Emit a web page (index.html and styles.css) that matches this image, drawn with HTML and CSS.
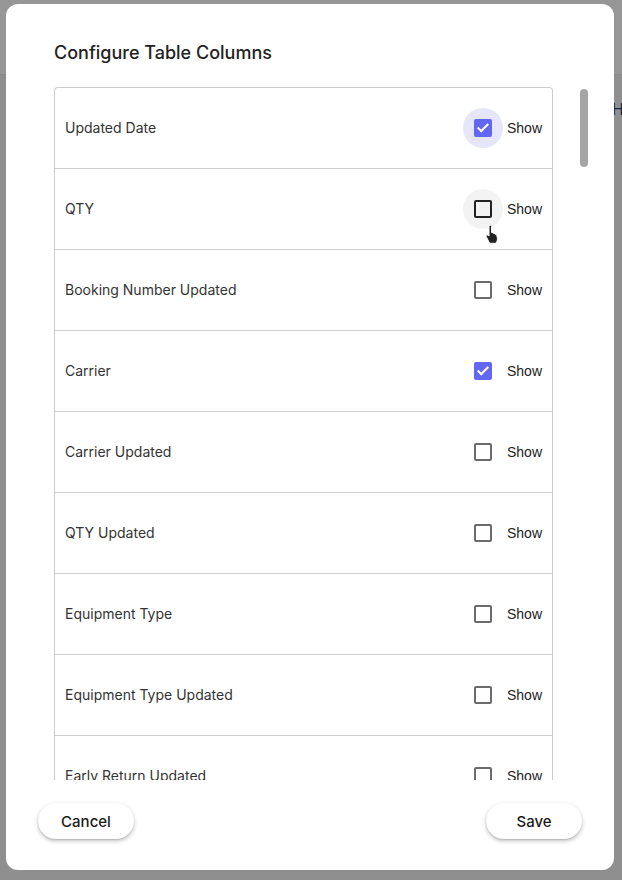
FILE: index.html
```html
<!DOCTYPE html>
<html lang="en">
<head>
    <meta charset="UTF-8">
    <meta name="viewport" content="width=device-width, initial-scale=1.0">
    <title>Configure Table Columns</title>
    <link rel="stylesheet" href="styles.css">
</head>
<body>
    <div class="page">
        <div class="page-header"></div>
        <span class="page-peek">H</span>
    </div>

    <div class="backdrop">
        <div class="dialog">
            <h2 class="dialog-title">Configure Table Columns</h2>

            <div class="scroll-area">
                <div class="column-list">
                    <div class="column-row">
                        <span class="column-name">Updated Date</span>
                        <label class="show-toggle">
                            <span class="check-wrap ripple-active"><span class="check checked"></span></span>
                            <span class="show-text">Show</span>
                        </label>
                    </div>
                    <div class="column-row">
                        <span class="column-name">QTY</span>
                        <label class="show-toggle">
                            <span class="check-wrap ripple-hover"><span class="check hovered"></span></span>
                            <span class="show-text">Show</span>
                        </label>
                        <svg class="hand-cursor" width="16" height="20" viewBox="0 0 16 20">
                            <path d="M5 1.5c0-.8.6-1.3 1.3-1.3s1.3.5 1.3 1.3v6.2l.3-.1c.7-.2 1.4.1 1.6.8l.1.2c.6-.3 1.4 0 1.6.7.6-.2 1.3.1 1.5.8l.6 2.6c.3 1.4.1 2.8-.6 4l-.9 1.6H5.6L2.4 12c-.4-.7-.2-1.5.5-1.9.6-.3 1.3-.2 1.7.4l.4.6z" fill="#222" stroke="#fff" stroke-width="1"/>
                        </svg>
                    </div>
                    <div class="column-row">
                        <span class="column-name">Booking Number Updated</span>
                        <label class="show-toggle">
                            <span class="check-wrap"><span class="check"></span></span>
                            <span class="show-text">Show</span>
                        </label>
                    </div>
                    <div class="column-row">
                        <span class="column-name">Carrier</span>
                        <label class="show-toggle">
                            <span class="check-wrap"><span class="check checked"></span></span>
                            <span class="show-text">Show</span>
                        </label>
                    </div>
                    <div class="column-row">
                        <span class="column-name">Carrier Updated</span>
                        <label class="show-toggle">
                            <span class="check-wrap"><span class="check"></span></span>
                            <span class="show-text">Show</span>
                        </label>
                    </div>
                    <div class="column-row">
                        <span class="column-name">QTY Updated</span>
                        <label class="show-toggle">
                            <span class="check-wrap"><span class="check"></span></span>
                            <span class="show-text">Show</span>
                        </label>
                    </div>
                    <div class="column-row">
                        <span class="column-name">Equipment Type</span>
                        <label class="show-toggle">
                            <span class="check-wrap"><span class="check"></span></span>
                            <span class="show-text">Show</span>
                        </label>
                    </div>
                    <div class="column-row">
                        <span class="column-name">Equipment Type Updated</span>
                        <label class="show-toggle">
                            <span class="check-wrap"><span class="check"></span></span>
                            <span class="show-text">Show</span>
                        </label>
                    </div>
                    <div class="column-row">
                        <span class="column-name">Early Return Updated</span>
                        <label class="show-toggle">
                            <span class="check-wrap"><span class="check"></span></span>
                            <span class="show-text">Show</span>
                        </label>
                    </div>
                </div>
                <div class="scrollbar"><div class="scroll-thumb"></div></div>
            </div>

            <div class="dialog-actions">
                <button class="pill-btn">Cancel</button>
                <button class="pill-btn">Save</button>
            </div>
        </div>
    </div>
</body>
</html>
```

FILE: styles.css
```css
body {
    margin: 0;
    padding: 0;
    font-family: Inter, "Noto Sans", sans-serif;
    background-color: #8f8f8f;
}
.page {
    height: 880px;
}
.page-header {
    height: 74px;
    background-color: #969696;
    border-bottom: 1px solid #8a8a8a;
}
.page-peek {
    position: absolute;
    left: 612px;
    top: 101px;
    font-family: "Liberation Sans", Arial, sans-serif;
    font-size: 16px;
    color: #1b2a44;
}
.backdrop {
    position: fixed;
    top: 0;
    left: 0;
    right: 0;
    bottom: 0;
    padding: 4px 8px 10px 6px;
}
.dialog {
    background-color: #ffffff;
    border-radius: 12px;
    height: 866px;
    box-sizing: border-box;
    padding-top: 37px;
    display: flex;
    flex-direction: column;
}
.dialog-title {
    margin: 0 0 22px 48px;
    font-size: 18px;
    line-height: 24px;
    font-weight: 500;
    color: #222222;
}
.scroll-area {
    display: flex;
    margin-left: 48px;
    height: 693px;
}
.column-list {
    width: 499px;
    box-sizing: border-box;
    border: 1px solid #cccccc;
    border-bottom: none;
    border-radius: 4px 4px 0 0;
    overflow: hidden;
}
.column-row {
    position: relative;
    height: 80px;
    border-bottom: 1px solid #d0d0d0;
    display: flex;
    align-items: center;
    justify-content: space-between;
    padding: 0 10px;
}
.column-name {
    font-size: 14px;
    line-height: 18px;
    margin-top: -1px;
    color: #333333;
}
.show-toggle {
    display: flex;
    align-items: center;
    gap: 4px;
}
.check-wrap {
    width: 40px;
    height: 40px;
    border-radius: 50%;
    display: flex;
    align-items: center;
    justify-content: center;
}
.ripple-active {
    background-color: #e6e6fb;
}
.ripple-hover {
    background-color: #f3f3f3;
}
.check {
    width: 18px;
    height: 18px;
    box-sizing: border-box;
    border: 2px solid #6b6b6b;
    border-radius: 2px;
    position: relative;
}
.check.hovered {
    border-color: #222222;
}
.check.checked {
    background-color: #6366f1;
    border-color: #6366f1;
}
.check.checked::after {
    content: "";
    position: absolute;
    left: 4px;
    top: 0px;
    width: 4px;
    height: 9px;
    border: solid #ffffff;
    border-width: 0 2px 2px 0;
    transform: rotate(45deg);
}
.show-text {
    font-family: "Liberation Sans", Arial, sans-serif;
    font-size: 14px;
    color: #222222;
}
.hand-cursor {
    position: absolute;
    left: 429px;
    top: 56px;
}
.scrollbar {
    margin-left: 27px;
    padding-top: 2px;
}
.scroll-thumb {
    width: 8px;
    height: 78px;
    border-radius: 4px;
    background-color: #a6a6a6;
}
.dialog-actions {
    display: flex;
    justify-content: space-between;
    padding: 23px 32px 0 32px;
}
.pill-btn {
    width: 96px;
    height: 36px;
    border: none;
    border-radius: 18px;
    background-color: #ffffff;
    box-shadow: 0 2px 4px rgba(0, 0, 0, 0.25), 0 1px 1px rgba(0, 0, 0, 0.1);
    font-family: Inter, "Noto Sans", sans-serif;
    font-size: 15px;
    font-weight: 500;
    color: #1a1a1a;
    cursor: pointer;
}
```
